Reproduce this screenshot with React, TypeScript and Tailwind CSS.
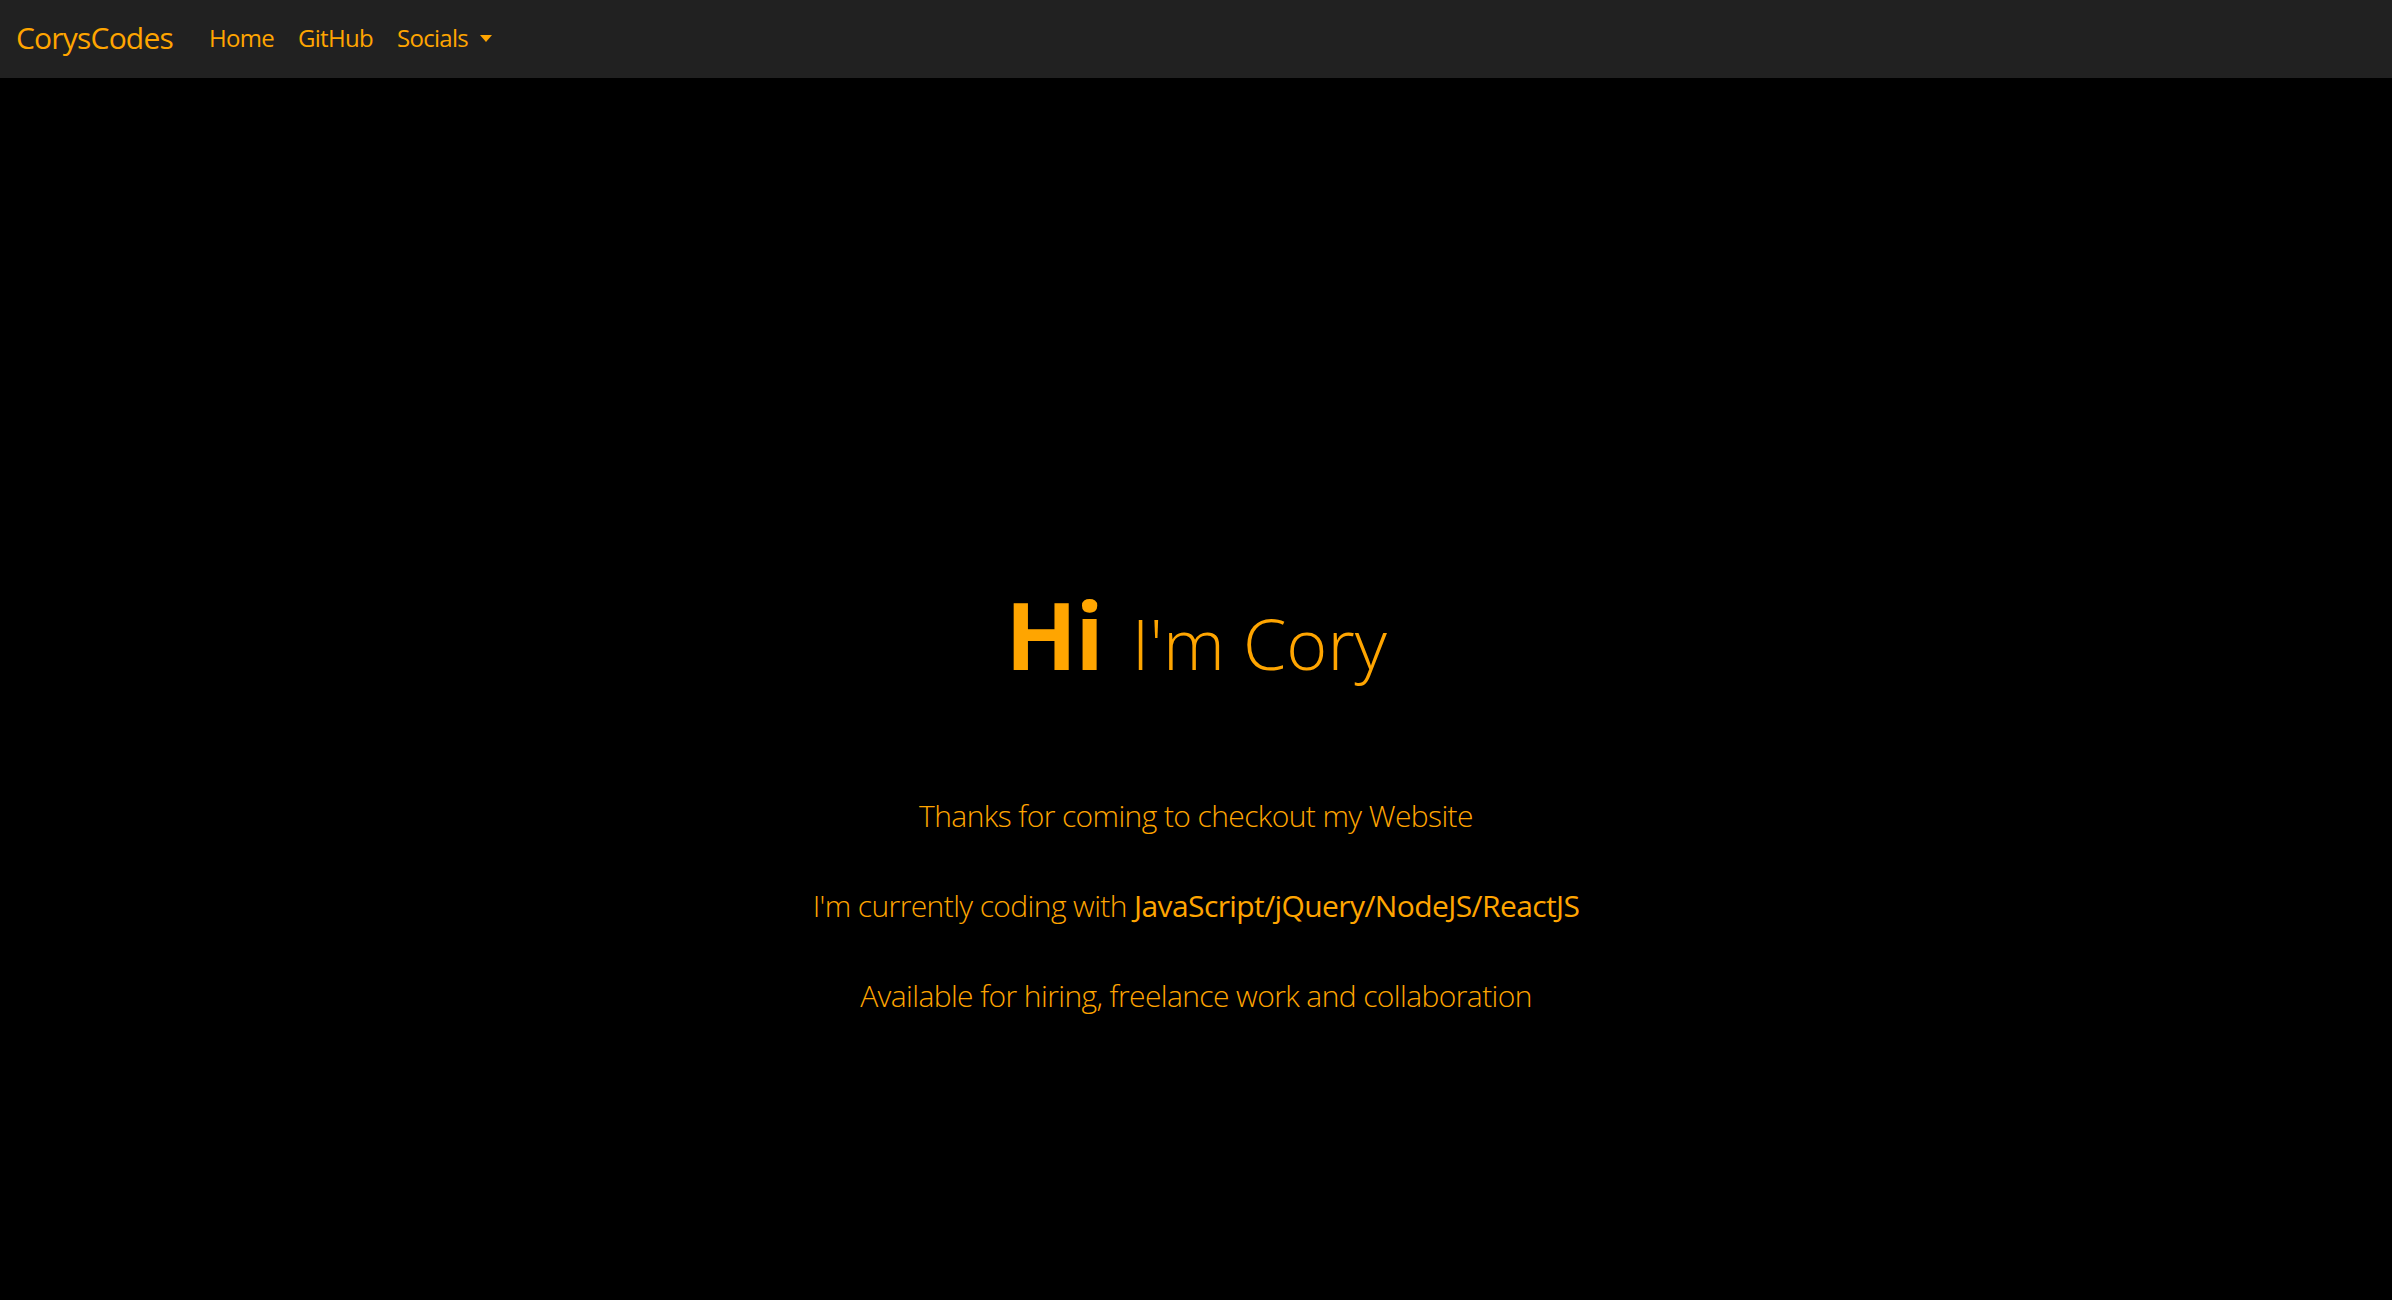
export default function App() {
  const font = { fontFamily: '"Open Sans", "Noto Sans", sans-serif' };
  return (
    <div className="min-h-[1300px] bg-black text-[#ffa500]" style={font}>
      <nav className="flex h-[78px] items-center bg-[#212121] px-4 pb-[3px]">
        <a href="#" className="mr-[36px] text-[30px] font-normal leading-none tracking-[-0.8px]">
          CorysCodes
        </a>
        <ul className="flex items-center gap-[24px] text-[24px] leading-none tracking-[-0.7px]">
          <li><a href="#">Home</a></li>
          <li><a href="#">GitHub</a></li>
          <li>
            <a href="#" className="flex items-center gap-[12px]">
              Socials
              <span className="mt-[2px] h-0 w-0 border-x-[6px] border-t-[7px] border-x-transparent border-t-[#ffa500]"></span>
            </a>
          </li>
        </ul>
      </nav>

      <main className="flex flex-col items-center pt-[500px] text-center">
        <h1 className="text-[94px] leading-[112px]">
          <span className="font-bold tracking-[-2px]">Hi</span>
          <span className="ml-[30px] text-[70px] font-light">I'm Cory</span>
        </h1>
        <div className="mt-[94px] flex flex-col gap-[45px] text-[30px] font-light leading-[45px] tracking-[-0.6px]">
          <p>Thanks for coming to checkout my Website</p>
          <p>
            I'm currently coding with <span className="font-normal">JavaScript/jQuery/NodeJS/ReactJS</span>
          </p>
          <p>Available for hiring, freelance work and collaboration</p>
        </div>
      </main>
    </div>
  );
}
